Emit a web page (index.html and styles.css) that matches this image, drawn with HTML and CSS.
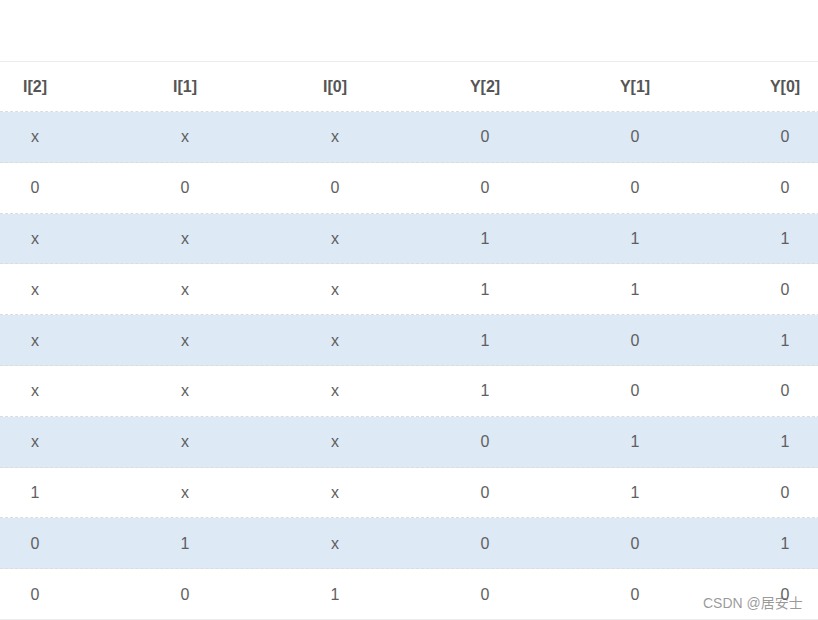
FILE: index.html
```html
<!DOCTYPE html>
<html>
<head>
<meta charset="utf-8">
<link rel="stylesheet" href="styles.css">
</head>
<body>
<div class="page">
  <div class="table">
    <div class="row head"><div>I[2]</div><div>I[1]</div><div>I[0]</div><div>Y[2]</div><div>Y[1]</div><div>Y[0]</div></div>
    <div class="row band"><div>x</div><div>x</div><div>x</div><div>0</div><div>0</div><div>0</div></div>
    <div class="row"><div>0</div><div>0</div><div>0</div><div>0</div><div>0</div><div>0</div></div>
    <div class="row band"><div>x</div><div>x</div><div>x</div><div>1</div><div>1</div><div>1</div></div>
    <div class="row"><div>x</div><div>x</div><div>x</div><div>1</div><div>1</div><div>0</div></div>
    <div class="row band"><div>x</div><div>x</div><div>x</div><div>1</div><div>0</div><div>1</div></div>
    <div class="row"><div>x</div><div>x</div><div>x</div><div>1</div><div>0</div><div>0</div></div>
    <div class="row band"><div>x</div><div>x</div><div>x</div><div>0</div><div>1</div><div>1</div></div>
    <div class="row"><div>1</div><div>x</div><div>x</div><div>0</div><div>1</div><div>0</div></div>
    <div class="row band"><div>0</div><div>1</div><div>x</div><div>0</div><div>0</div><div>1</div></div>
    <div class="row last"><div>0</div><div>0</div><div>1</div><div>0</div><div>0</div><div>0</div></div>
  </div>
  <div class="watermark">CSDN @居安士</div>
</div>
</body>
</html>
```

FILE: styles.css
```css
html, body {
  margin: 0;
  padding: 0;
  background: #fff;
  overflow: hidden;
}
.page {
  position: relative;
  width: 818px;
  height: 620px;
  padding-top: 61px;
  box-sizing: border-box;
  overflow: hidden;
  font-family: "Liberation Sans", Arial, sans-serif;
  font-size: 16px;
  color: #5f5f5f;
}
.table {
  margin-left: -40px;
  width: 900px;
}
.row {
  display: grid;
  grid-template-columns: repeat(6, 150px);
  height: 50.8px;
  box-sizing: border-box;
  padding-top: 1px;
  border-bottom: 1px dashed #dcdcdc;
  align-items: center;
  text-align: center;
}
.row.head {
  height: 51px;
  padding-top: 0;
  border-top: 1px solid #ececec;
  font-weight: bold;
  color: #555;
}
.row.band {
  background: #dde9f5;
}
.row.last {
  border-bottom: 1px solid #ececec;
}
.watermark {
  position: absolute;
  left: 703px;
  top: 592px;
  font-family: "Liberation Sans", "Noto Sans CJK SC", sans-serif;
  font-size: 14px;
  color: rgba(120, 120, 120, 0.75);
}
```
